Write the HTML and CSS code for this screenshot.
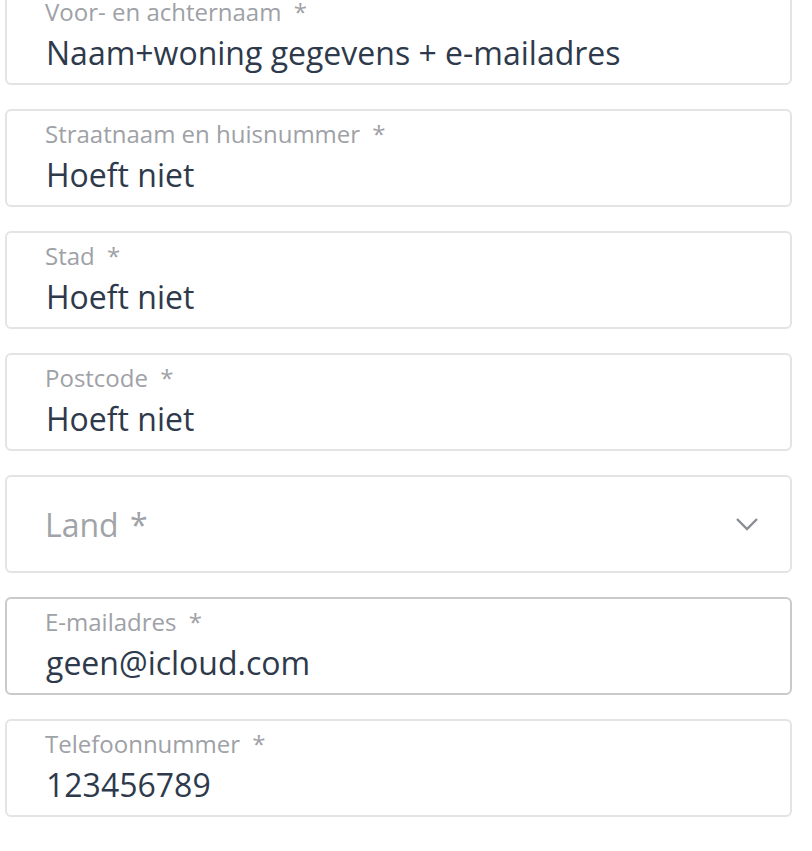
FILE: index.html
```html
<!DOCTYPE html>
<html lang="nl">
<head>
<meta charset="utf-8">
<title>Adres</title>
<link rel="stylesheet" href="styles.css">
</head>
<body>
<form class="form">
  <div class="field">
    <span class="label">Voor- en achternaam <span class="req">*</span></span>
    <span class="value">Naam+woning gegevens + e-mailadres</span>
  </div>
  <div class="field">
    <span class="label">Straatnaam en huisnummer <span class="req">*</span></span>
    <span class="value">Hoeft niet</span>
  </div>
  <div class="field">
    <span class="label">Stad <span class="req">*</span></span>
    <span class="value">Hoeft niet</span>
  </div>
  <div class="field">
    <span class="label">Postcode <span class="req">*</span></span>
    <span class="value">Hoeft niet</span>
  </div>
  <div class="field select">
    <span class="placeholder">Land <span class="req-big">*</span></span>
    <svg class="chevron" width="24" height="14" viewBox="0 0 24 14"><path d="M2 2 L12 12 L22 2" fill="none" stroke="#8a8d93" stroke-width="2.4"/></svg>
  </div>
  <div class="field focused">
    <span class="label">E-mailadres <span class="req">*</span></span>
    <span class="value">geen@icloud.com</span>
  </div>
  <div class="field">
    <span class="label">Telefoonnummer <span class="req">*</span></span>
    <span class="value">123456789</span>
  </div>
</form>
</body>
</html>
```
FILE: styles.css
```css
html, body {
  margin: 0;
  padding: 0;
  background: #ffffff;
}
body {
  font-family: "Open Sans", "Noto Sans", sans-serif;
  overflow: hidden;
}
.form {
  display: flex;
  flex-direction: column;
  gap: 24px;
  margin: -13px 20px 0 5px;
}
.field {
  box-sizing: border-box;
  height: 98px;
  border: 2px solid #e4e4e4;
  border-radius: 6px;
  padding: 0 0 0 38px;
  display: flex;
  flex-direction: column;
}
.field.focused {
  border-color: #cacaca;
}
.label {
  margin-top: 8px;
  font-size: 24px;
  line-height: 30px;
  color: #9ea1a6;
  white-space: nowrap;
}
.req {
  margin-left: 6px;
}
.value {
  margin-top: 6px;
  margin-left: 1px;
  font-size: 32px;
  line-height: 40px;
  color: #2e3a4b;
  white-space: nowrap;
}
.field.select {
  flex-direction: row;
  align-items: center;
  justify-content: space-between;
  padding-right: 31px;
}
.placeholder {
  font-size: 32px;
  color: #a0a3a8;
}
.req-big {
  margin-left: 3px;
}
.chevron {
  display: block;
}
```
